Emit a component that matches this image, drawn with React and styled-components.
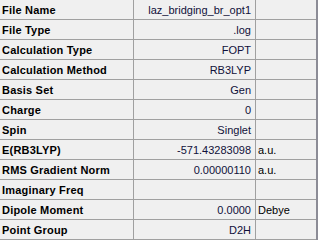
import React from 'react'
import styled, { createGlobalStyle } from 'styled-components'

const GlobalStyle = createGlobalStyle`
  html, body {
    margin: 0;
    padding: 0;
    background: #f0f0f0;
  }
`

const Panel = styled.div`
  width: 318px;
  height: 240px;
  background: #f0f0f0;
  font-family: Tahoma, "Liberation Sans", "DejaVu Sans", sans-serif;
  font-size: 11px;
  color: #000;
  overflow: hidden;
  display: flex;
`

const Grid = styled.div`
  width: 316px;
  display: grid;
  grid-template-columns: 134px 122px 60px;
  grid-auto-rows: 20px;
  align-content: start;
`

const Edge = styled.div`
  width: 2px;
  background: #8c8c96;
`

const Cell = styled.div`
  display: flex;
  align-items: center;
  justify-content: ${p => (p.$right ? 'flex-end' : 'flex-start')};
  padding: 0 ${p => (p.$right ? '4px' : '0')} 0 ${p => (p.$right ? '0' : '2px')};
  border-bottom: 1px solid #a0a0a0;
  border-right: ${p => (p.$last ? 'none' : '1px solid #a0a0a0')};
  font-weight: ${p => (p.$bold ? 700 : 400)};
  letter-spacing: ${p => (p.$bold ? '0.2px' : '0')};
  color: ${p => (p.$value ? '#10103a' : '#000')};
  white-space: nowrap;
  overflow: hidden;
  box-sizing: border-box;
`

const rows = [
  ['File Name', 'laz_bridging_br_opt1', ''],
  ['File Type', '.log', ''],
  ['Calculation Type', 'FOPT', ''],
  ['Calculation Method', 'RB3LYP', ''],
  ['Basis Set', 'Gen', ''],
  ['Charge', '0', ''],
  ['Spin', 'Singlet', ''],
  ['E(RB3LYP)', '-571.43283098', 'a.u.'],
  ['RMS Gradient Norm', '0.00000110', 'a.u.'],
  ['Imaginary Freq', '', ''],
  ['Dipole Moment', '0.0000', 'Debye'],
  ['Point Group', 'D2H', ''],
]

export default function App() {
  return (
    <>
      <GlobalStyle />
      <Panel>
        <Grid>
          {rows.map(([label, value, unit]) => (
            <React.Fragment key={label}>
              <Cell $bold>{label}</Cell>
              <Cell $right $value>{value}</Cell>
              <Cell $last>{unit}</Cell>
            </React.Fragment>
          ))}
        </Grid>
        <Edge />
      </Panel>
    </>
  )
}
